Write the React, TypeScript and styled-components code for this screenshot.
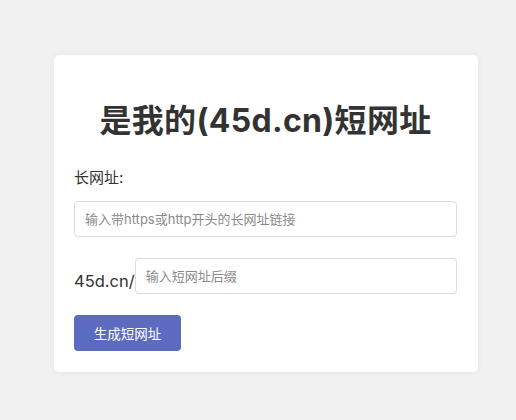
import React, { useState } from 'react'
import styled, { createGlobalStyle } from 'styled-components'

const GlobalStyle = createGlobalStyle`
  body {
    margin: 0;
    background: #f1f1f1;
    font-family: "Inter", "Noto Sans CJK SC", sans-serif;
    color: #333;
  }
`

const Page = styled.div`
  padding: 55px 0 40px 54px;
`

const Card = styled.div`
  width: 424px;
  box-sizing: border-box;
  background: #fff;
  border-radius: 5px;
  box-shadow: 0 0 6px rgba(0, 0, 0, 0.06);
  padding: 40px 21px 21px 20px;
`

const Title = styled.h1`
  margin: 0 0 20px;
  text-align: center;
  font-size: 32px;
  font-weight: 700;
  letter-spacing: 0.3px;
  color: #333;
  line-height: 52px;
`

const Label = styled.div`
  font-size: 15px;
  line-height: 22px;
  margin-bottom: 12px;
`

const Field = styled.input<{ $grow?: boolean }>`
  box-sizing: border-box;
  height: 36px;
  width: ${p => (p.$grow ? 'auto' : '100%')};
  flex: ${p => (p.$grow ? '1' : 'none')};
  border: 1px solid #dcdcdc;
  border-radius: 4px;
  padding: 0 10px;
  font-family: "Inter", "Noto Sans CJK SC", sans-serif;
  font-size: 13px;
  color: #333;
  outline: none;
  &::placeholder {
    color: #8a8a8a;
  }
`

const Row = styled.div`
  display: flex;
  align-items: flex-end;
  margin-top: 21px;
`

const Prefix = styled.span`
  font-size: 16.5px;
  line-height: 22px;
  margin-bottom: 2px;
`

const Button = styled.button`
  margin-top: 21px;
  width: 107px;
  height: 36px;
  border: none;
  border-radius: 4px;
  background: #5c6bc0;
  color: #fff;
  font-family: "Inter", "Noto Sans CJK SC", sans-serif;
  font-size: 13.5px;
  cursor: pointer;
`

function App() {
  const [longUrl, setLongUrl] = useState<string>('')
  const [suffix, setSuffix] = useState<string>('')

  return (
    <Page>
      <GlobalStyle />
      <Card>
        <Title>是我的(45d.cn)短网址</Title>
        <Label>长网址:</Label>
        <Field
          type='text'
          placeholder='输入带https或http开头的长网址链接'
          value={longUrl}
          onChange={(e: any) => setLongUrl(e.target.value)}
        />
        <Row>
          <Prefix>45d.cn/</Prefix>
          <Field
            $grow
            type='text'
            placeholder='输入短网址后缀'
            value={suffix}
            onChange={(e: any) => setSuffix(e.target.value)}
          />
        </Row>
        <Button>生成短网址</Button>
      </Card>
    </Page>
  )
}

export default App
